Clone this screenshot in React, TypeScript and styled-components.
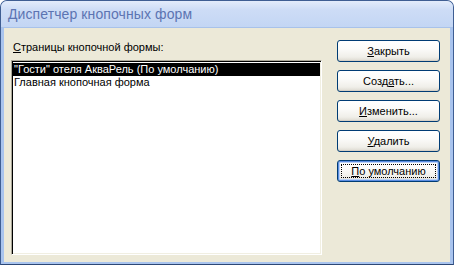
import React from "react";
import styled, { createGlobalStyle } from "styled-components";

const Global = createGlobalStyle`
  html, body { margin: 0; padding: 0; background: #ffffff; }
  body { font-family: "Liberation Sans", Arial, sans-serif; }
`;

const Window = styled.div`
  width: 454px;
  height: 265px;
  box-sizing: border-box;
  display: flex;
  flex-direction: column;
  background: #a9c4ee;
  border: 1px solid #3f5e93;
  border-bottom-color: #2c4775;
  border-radius: 7px 7px 0 0;
  overflow: hidden;
`;

const TitleBar = styled.div`
  height: 26px;
  flex: none;
  display: flex;
  align-items: center;
  padding-left: 7px;
  background: linear-gradient(#e3ecfb 0%, #cddcf6 35%, #c3d6f4 100%);
  border-bottom: 1px solid #a8c2ea;
  font-family: "Liberation Sans", Arial, sans-serif;
  font-size: 14px;
  color: #5c74b2;
  letter-spacing: 0.1px;
`;

const Client = styled.div`
  flex: 1;
  margin: 0 3px 2px 3px;
  background: #ece9d8;
  display: flex;
  padding: 12px 10px 7px 7px;
  gap: 15px;
  font-size: 11px;
  color: #000;
`;

const LeftPane = styled.div`
  display: flex;
  flex-direction: column;
  width: 311px;
`;

const Label = styled.div`
  padding-left: 2px;
  height: 20px;
  line-height: 14px;
`;

const Accel = styled.span`
  text-decoration: underline;
  text-underline-offset: 1px;
`;

const ListBox = styled.div`
  flex: 1;
  background: #ffffff;
  border-top: 1px solid #aca899;
  border-left: 1px solid #aca899;
  border-right: 1px solid #ffffff;
  border-bottom: 1px solid #ffffff;
  box-shadow: inset 1px 1px 0 #000000, inset -1px -1px 0 #f1efe2;
  padding: 2px 1px 0 1px;
`;

const Item = styled.div<{ $selected?: boolean }>`
  height: 13px;
  line-height: 13px;
  padding-left: 1px;
  white-space: nowrap;
  background: ${(p) => (p.$selected ? "#000000" : "transparent")};
  color: ${(p) => (p.$selected ? "#ffffff" : "#000000")};
`;

const Buttons = styled.div`
  display: flex;
  flex-direction: column;
  gap: 8px;
  width: 103px;
`;

const Button = styled.div<{ $default?: boolean }>`
  position: relative;
  height: 22px;
  box-sizing: border-box;
  border: 1px solid #003c74;
  border-radius: 3px;
  background: linear-gradient(#ffffff 0%, #fbfbf9 40%, #f0efe9 80%, #dcd9cf 100%);
  display: flex;
  align-items: center;
  justify-content: center;
  font-size: 11px;
  color: #000;
  box-shadow: ${(p) =>
    p.$default
      ? "inset 0 0 0 1px #5b8de2, inset 0 0 0 2px #b9d1f6"
      : "inset 0 -1px 0 #d6d0c5"};
  &::after {
    content: "";
    display: ${(p) => (p.$default ? "block" : "none")};
    position: absolute;
    inset: 3px;
    border: 1px dotted #000;
  }
`;

export default function App() {
  return (
    <>
      <Global />
      <Window>
        <TitleBar>Диспетчер кнопочных форм</TitleBar>
        <Client>
          <LeftPane>
            <Label>
              <Accel>С</Accel>траницы кнопочной формы:
            </Label>
            <ListBox>
              <Item $selected>"Гости" отеля АкваРель (По умолчанию)</Item>
              <Item>Главная кнопочная форма</Item>
            </ListBox>
          </LeftPane>
          <Buttons>
            <Button>
              <span>
                <Accel>З</Accel>акрыть
              </span>
            </Button>
            <Button>
              <span>
                Созд<Accel>а</Accel>ть...
              </span>
            </Button>
            <Button>
              <span>
                <Accel>И</Accel>зменить...
              </span>
            </Button>
            <Button>
              <span>
                <Accel>У</Accel>далить
              </span>
            </Button>
            <Button $default>
              <span>
                <Accel>П</Accel>о умолчанию
              </span>
            </Button>
          </Buttons>
        </Client>
      </Window>
    </>
  );
}
